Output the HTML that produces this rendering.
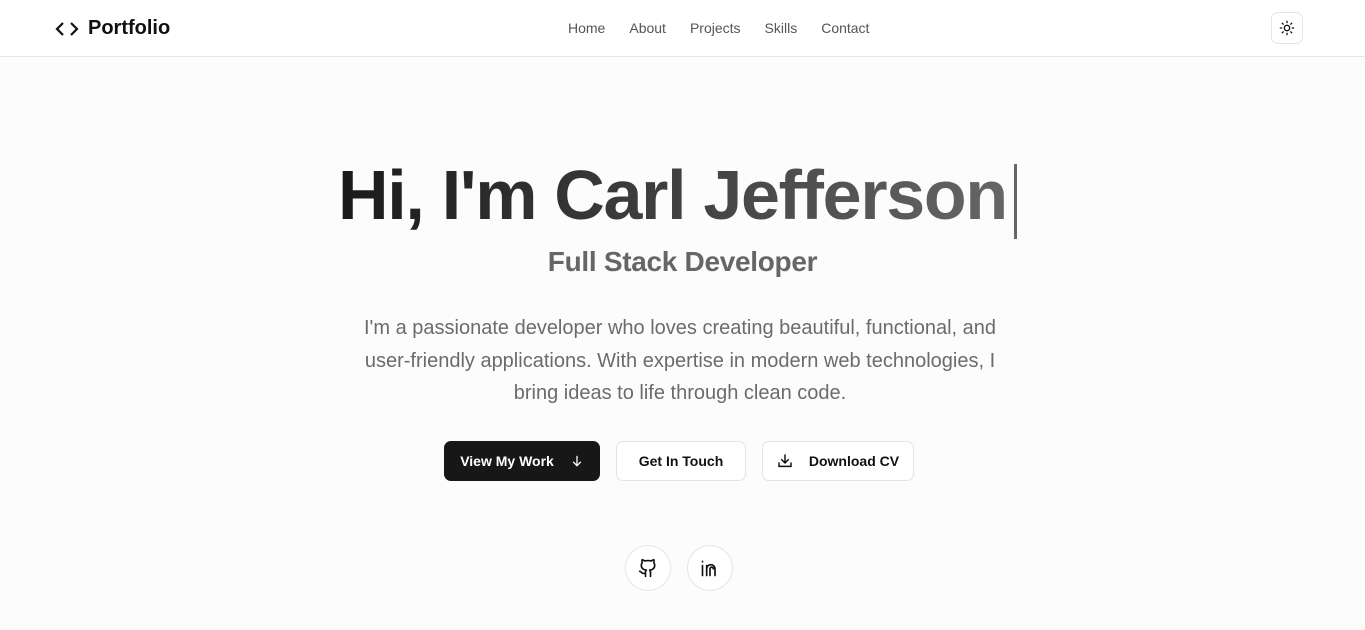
<!DOCTYPE html>
<html><head><meta charset="utf-8"><style>
*{margin:0;padding:0;box-sizing:border-box}
body{width:1365px;height:630px;overflow:hidden;background:#fcfcfc;font-family:"Liberation Sans",sans-serif;color:#111;position:relative}
.nav{position:absolute;top:0;left:0;width:1365px;height:57px;background:#fff;border-bottom:1px solid #e6e6e6}
.logo{position:absolute;left:55px;top:17px;font-size:20px;font-weight:bold;display:flex;align-items:center;gap:9px}
.links{position:absolute;top:20px;left:568px;font-size:14px;color:#555;display:flex;gap:24px}
.theme{position:absolute;left:1271px;top:12px;width:32px;height:32px;border:1px solid #e5e5e5;border-radius:7px;background:#fff;display:flex;align-items:center;justify-content:center}
h1{position:absolute;top:155px;left:338px;white-space:nowrap;font-size:70px;font-weight:bold;letter-spacing:-1.3px;}
h1 span{background:linear-gradient(90deg,#1a1a1a,#666);-webkit-background-clip:text;background-clip:text;color:transparent}
.cursor{position:absolute;left:1014px;top:164px;width:3px;height:75px;background:#666}
h2{position:absolute;top:246px;width:1365px;text-align:center;font-size:28px;font-weight:bold;color:#666;letter-spacing:-0.3px}
p{position:absolute;top:312px;left:330px;width:700px;text-align:center;font-size:20px;line-height:32.5px;color:#6b6b6b;white-space:nowrap}
.btn{position:absolute;top:441px;height:40px;border-radius:7px;font-size:14px;font-weight:bold;display:flex;align-items:center;justify-content:center;gap:16px}
.w{background:#fff;border:1px solid #e3e3e3;color:#111}
.soc{position:absolute;top:545px;width:46px;height:46px;border-radius:50%;border:1px solid #e6e6e6;background:#fff;display:flex;align-items:center;justify-content:center}
</style></head><body>
<div class="nav">
<div class="logo"><svg width="24" height="20" viewBox="0 0 24 20" fill="none" stroke="#111" stroke-width="2.2"><path d="M8 4L2 10l6 6M16 4l6 6-6 6"/></svg>Portfolio</div>
<div class="links"><span>Home</span><span>About</span><span>Projects</span><span>Skills</span><span>Contact</span></div>
<div class="theme"><svg width="16" height="16" viewBox="0 0 24 24" fill="none" stroke="#111" stroke-width="2" stroke-linecap="round"><circle cx="12" cy="12" r="4"/><path d="M12 2v2M12 20v2M4.9 4.9l1.4 1.4M17.7 17.7l1.4 1.4M2 12h2M20 12h2M4.9 19.1l1.4-1.4M17.7 6.3l1.4-1.4"/></svg></div>
</div>
<h1><span>Hi, I'm Carl Jefferson</span></h1>
<div class="cursor"></div>
<h2>Full Stack Developer</h2>
<p>I'm a passionate developer who loves creating beautiful, functional, and<br>user-friendly applications. With expertise in modern web technologies, I<br>bring ideas to life through clean code.</p>
<div class="btn" style="left:444px;width:156px;background:#171717;color:#fff">View My Work <svg width="14" height="14" viewBox="0 0 24 24" fill="none" stroke="#fff" stroke-width="2.2" stroke-linecap="round"><path d="M12 4v16M6 14l6 6 6-6"/></svg></div>
<div class="btn w" style="left:616px;width:130px">Get In Touch</div>
<div class="btn w" style="left:762px;width:152px"><svg width="16" height="16" viewBox="0 0 24 24" fill="none" stroke="#111" stroke-width="2.2" stroke-linecap="round"><path d="M12 3v12M7 10l5 5 5-5M3 15v5h18v-5"/></svg>Download CV</div>
<div class="soc" style="left:625px"><svg width="20" height="20" viewBox="0 0 24 24" fill="none" stroke="#111" stroke-width="2" stroke-linecap="round" stroke-linejoin="round"><path d="M15 22v-4a4.8 4.8 0 0 0-1-3.5c3 0 6-2 6-5.5.08-1.25-.27-2.48-1-3.5.28-1.15.28-2.35 0-3.5 0 0-1 0-3 1.5-2.64-.5-5.36-.5-8 0C6 2 5 2 5 2c-.3 1.15-.3 2.35 0 3.5A5.4 5.4 0 0 0 4 9c0 3.5 3 5.5 6 5.5-.39.49-.68 1.05-.85 1.65S8.93 17.38 9 18v4M9 18c-4.51 2-5-2-7-2"/></svg></div>
<div class="soc" style="left:687px"><svg width="20" height="20" viewBox="0 0 24 24" fill="none" stroke="#111" stroke-width="2" stroke-linecap="round"><path d="M3 9v12M3 4v.5M8 21V9M8 13a5 5 0 0 1 10 0v8"/><path d="M12 21v-8a2 2 0 0 1 4 0"/></svg></div>
</body></html>
